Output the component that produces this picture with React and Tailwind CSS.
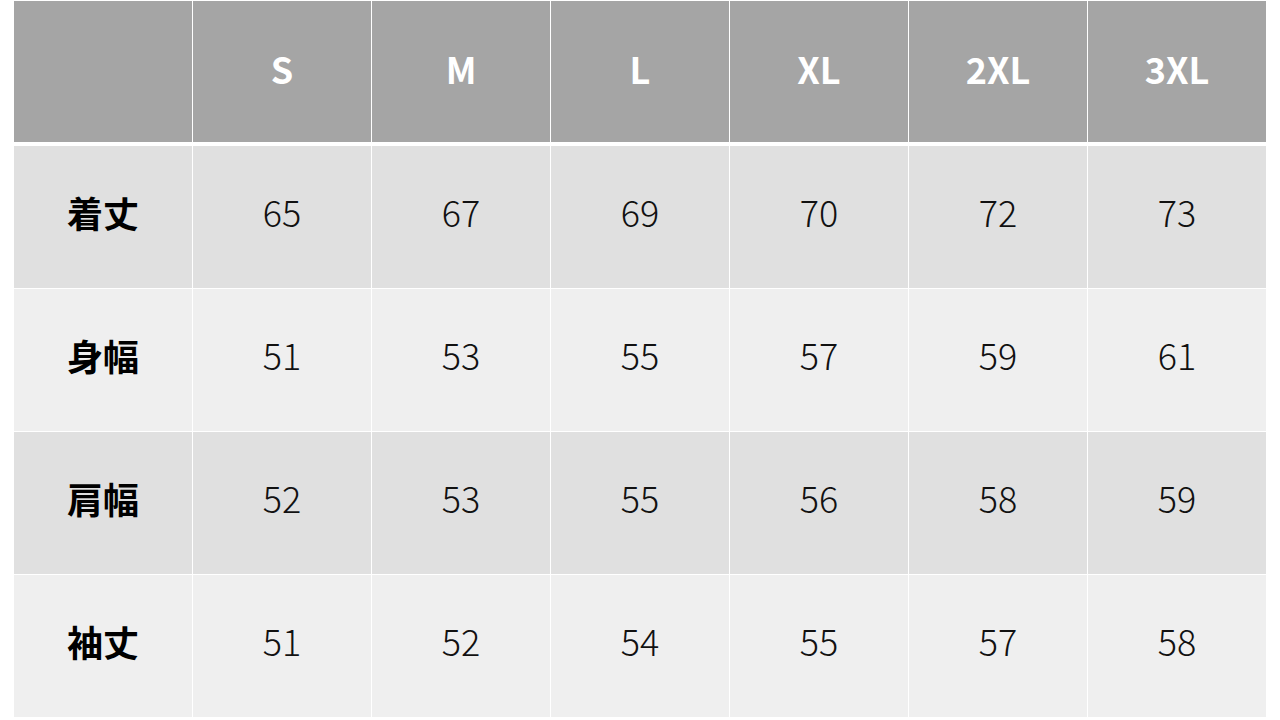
import React from 'react';

const sizes = ['S', 'M', 'L', 'XL', '2XL', '3XL'];

const rows = [
  { label: '着丈', values: [65, 67, 69, 70, 72, 73], bg: 'bg-[#e0e0e0]' },
  { label: '身幅', values: [51, 53, 55, 57, 59, 61], bg: 'bg-[#efefef]' },
  { label: '肩幅', values: [52, 53, 55, 56, 58, 59], bg: 'bg-[#e0e0e0]' },
  { label: '袖丈', values: [51, 52, 54, 55, 57, 58], bg: 'bg-[#efefef]' },
];

const font = { fontFamily: '"Noto Sans CJK JP", "Noto Sans", sans-serif' };

const App = () => {
  return (
    <div className="w-[1280px] h-[720px] bg-white pt-px pl-[14px] overflow-hidden" style={font}>
      {/* header */}
      <div className="grid grid-cols-[repeat(7,178px)] gap-x-px h-[141px]">
        <div className="bg-[#a5a5a5]" />
        {sizes.map((s) => (
          <div key={s} className="bg-[#a5a5a5] flex items-center justify-center pb-[8px] text-white text-[36px] font-bold">
            {s}
          </div>
        ))}
      </div>

      <div className="flex flex-col gap-y-px mt-[4px]">
        {rows.map((r) => (
          <div key={r.label} className="grid grid-cols-[repeat(7,178px)] gap-x-px h-[142px]">
            <div className={`${r.bg} flex items-center justify-center pb-[10px] text-black text-[36px] font-bold`}>
              {r.label}
            </div>
            {r.values.map((v, i) => (
              <div key={i} className={`${r.bg} flex items-center justify-center pb-[12px] text-[#111] text-[36px] font-light`}>
                {v}
              </div>
            ))}
          </div>
        ))}
      </div>
    </div>
  );
};

export default App;
